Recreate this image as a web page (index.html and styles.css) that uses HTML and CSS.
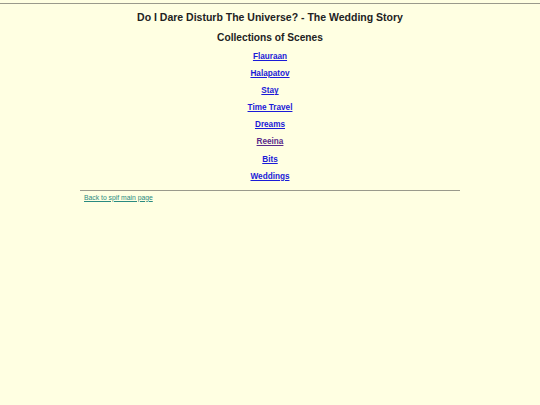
FILE: index.html
```html
<!DOCTYPE html>
<html lang="en">
<head>
<meta charset="utf-8">
<title>Do I Dare Disturb The Universe? - The Wedding Story</title>
<link rel="stylesheet" href="styles.css">
</head>
<body>
<hr class="rule-top">
<h1 class="title">Do I Dare Disturb The Universe? - The Wedding Story</h1>
<h2 class="subtitle">Collections of Scenes</h2>
<ul class="scenes">
  <li><a href="#flauraan">Flauraan</a></li>
  <li><a href="#halapatov">Halapatov</a></li>
  <li><a href="#stay">Stay</a></li>
  <li><a href="#time-travel">Time Travel</a></li>
  <li><a href="#dreams">Dreams</a></li>
  <li><a href="#reeina" class="visited">Reeina</a></li>
  <li><a href="#bits">Bits</a></li>
  <li><a href="#weddings">Weddings</a></li>
</ul>
<hr class="rule-bottom">
<p class="back"><a href="#main">Back to spif main page</a></p>
</body>
</html>
```
FILE: styles.css
```css
html, body {
  margin: 0;
  padding: 0;
}

body {
  background: #ffffe2;
  color: #222;
  font-family: "Liberation Sans", Arial, sans-serif;
  display: flex;
  flex-direction: column;
  align-items: center;
}

.rule-top {
  align-self: stretch;
  margin: 3px 0 0;
  border: 0;
  border-top: 1px solid #9a9a8c;
  height: 0;
}

.title {
  margin: 6px 0 0;
  font-size: 10.5px;
  line-height: 14px;
  font-weight: bold;
}

.subtitle {
  margin: 7px 0 0;
  font-size: 10.2px;
  line-height: 14px;
  font-weight: bold;
}

.scenes {
  list-style: none;
  margin: 3px 0 0;
  padding: 0;
  display: flex;
  flex-direction: column;
  align-items: center;
}

.scenes li {
  font-size: 8.2px;
  line-height: 17.1px;
  font-weight: bold;
}

.scenes a {
  color: #1a1ad8;
}

.scenes a.visited {
  color: #5a2a8a;
}

.rule-bottom {
  width: 380px;
  margin: 5px 0 0;
  border: 0;
  border-top: 1px solid #9a9a8c;
  height: 0;
}

.back {
  width: 380px;
  margin: 2px 0 0;
  padding-left: 4px;
  box-sizing: border-box;
  font-size: 6.8px;
  line-height: 10px;
}

.back a {
  color: #2a8a80;
}
```
